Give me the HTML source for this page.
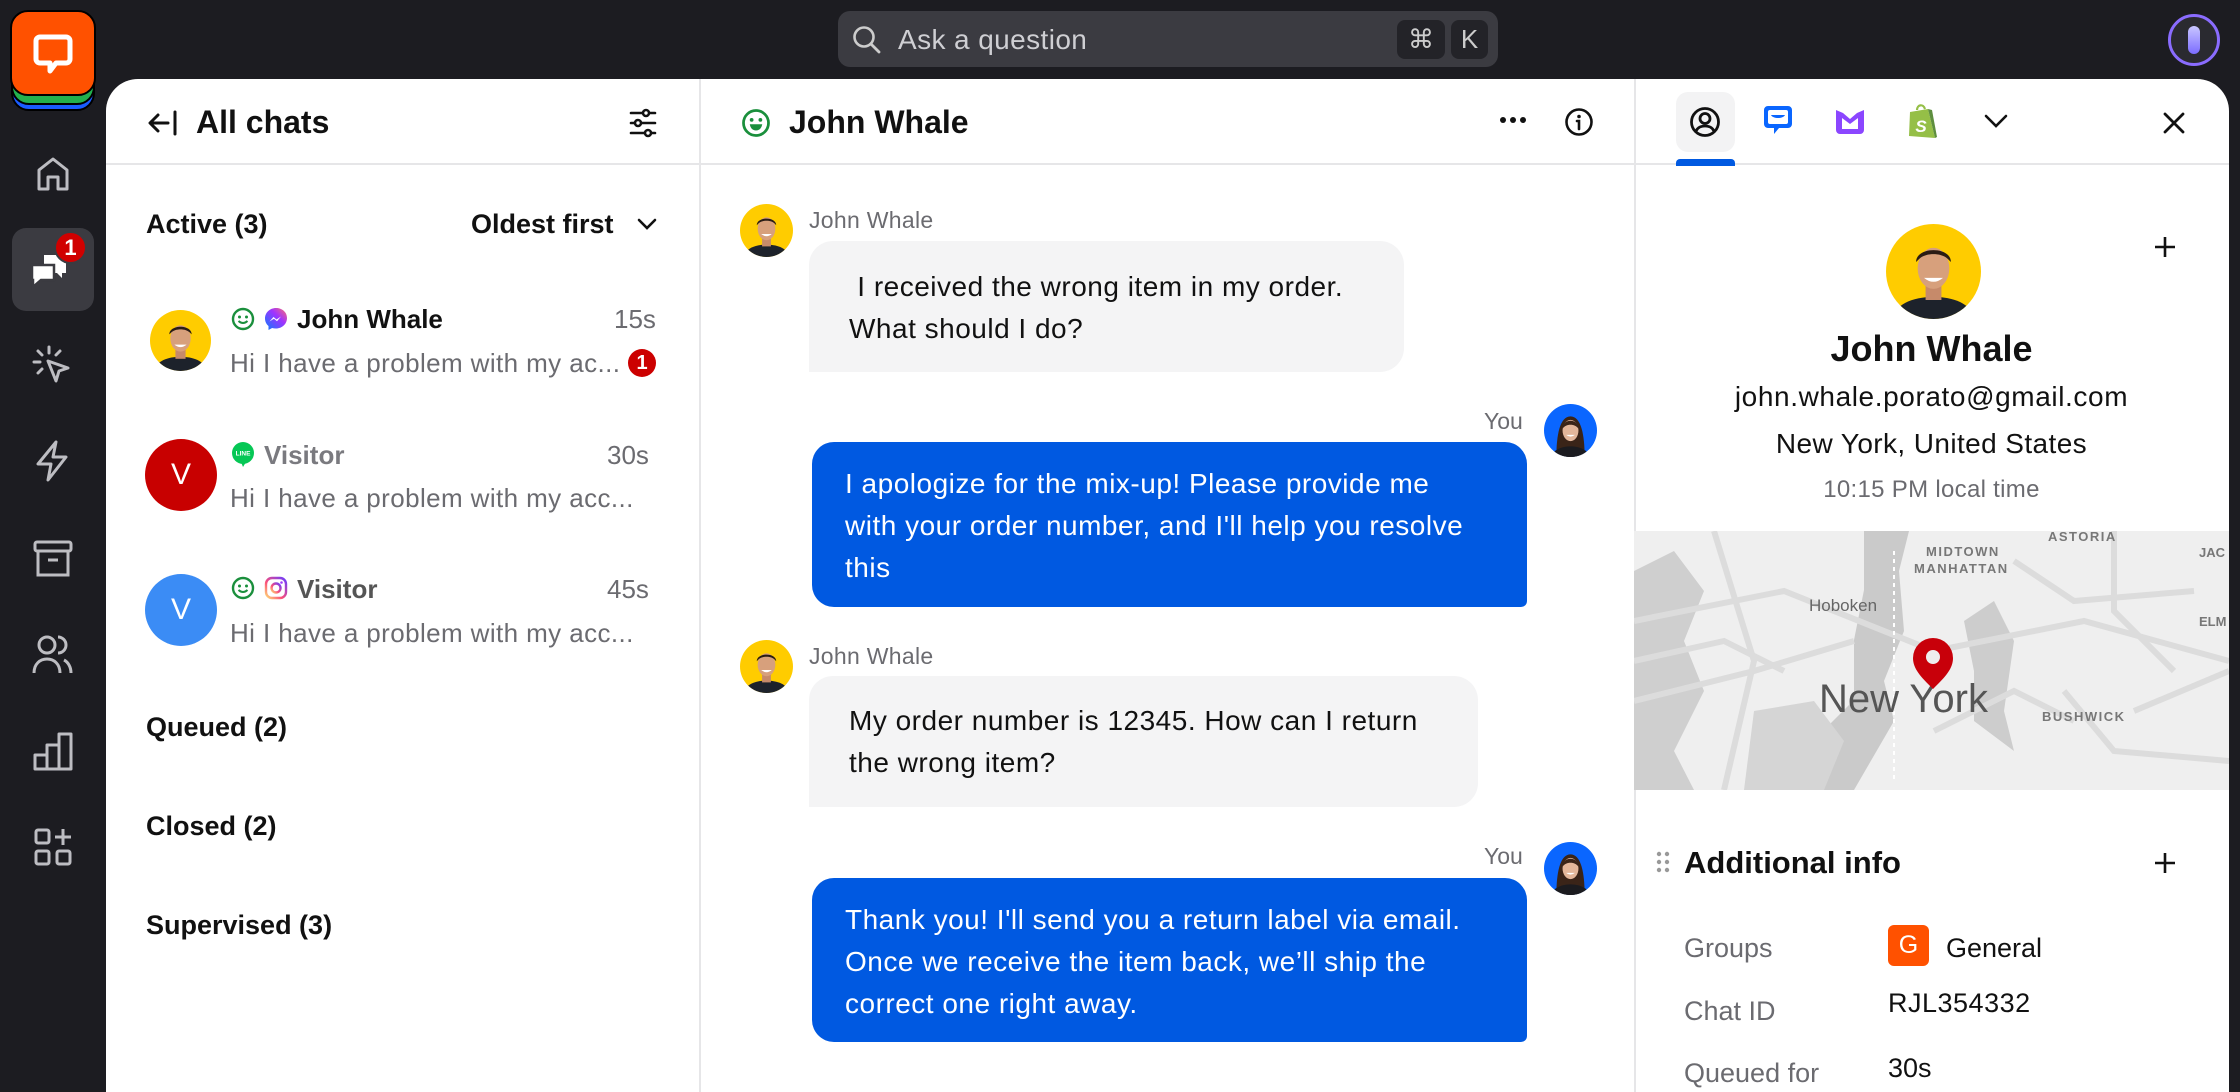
<!DOCTYPE html>
<html><head><meta charset="utf-8">
<style>
*{box-sizing:border-box;margin:0;padding:0}
html,body{width:2240px;height:1092px;overflow:hidden;background:#1c1c21;font-family:"Liberation Sans",sans-serif;color:#111}
.a{position:absolute}
.t{position:absolute;white-space:nowrap;line-height:1}
.main{position:absolute;left:106px;top:79px;width:2123px;height:1013px;background:#fff;border-radius:32px 32px 0 0;overflow:hidden}
.g{color:#6b6b70}
.bubg{position:absolute;background:#f4f4f5;border-radius:24px 24px 24px 0}
.bubb{position:absolute;background:#0059e1;border-radius:22px 22px 6px 22px;color:#fff}
.msg{position:absolute;font-size:28px;letter-spacing:0.5px;line-height:42px;white-space:nowrap}
.pv{letter-spacing:0.4px}
</style></head><body>

<!-- top bar -->
<div class="a" style="left:838px;top:11px;width:660px;height:56px;background:#3b3b41;border-radius:12px"></div>
<svg class="a" style="left:851px;top:24px" width="32" height="32" viewBox="0 0 32 32"><circle cx="13" cy="13" r="9.5" fill="none" stroke="#ccc" stroke-width="2.6"/><path d="M20 20l8 8" stroke="#ccc" stroke-width="2.8" stroke-linecap="round"/></svg>
<div class="t" style="left:898px;top:26px;font-size:28px;color:#cfcfd3;letter-spacing:0.4px">Ask a question</div>
<div class="a" style="left:1397px;top:20px;width:48px;height:39px;background:#232328;border-radius:8px;color:#ccc;font-size:26px;text-align:center;line-height:39px">⌘</div>
<div class="a" style="left:1451px;top:20px;width:37px;height:39px;background:#232328;border-radius:8px;color:#ccc;font-size:26px;text-align:center;line-height:39px">K</div>
<div class="a" style="left:2168px;top:14px;width:52px;height:52px;border-radius:50%;border:3px solid #8a6cff;background:#2a2a30"></div>
<div class="a" style="left:2188px;top:26px;width:12px;height:28px;border-radius:6px;background:linear-gradient(#c9c6ff,#7b6cff)"></div>

<!-- logo -->
<div class="a" style="left:11px;top:27px;width:84px;height:84px;border-radius:18px;background:#1a5cff;border:2px solid #000"></div>
<div class="a" style="left:11px;top:21px;width:84px;height:84px;border-radius:18px;background:#23b14d;border:2px solid #000"></div>
<div class="a" style="left:10px;top:10px;width:86px;height:86px;border-radius:18px;background:#ff5100;border:2px solid #000"></div>
<svg class="a" style="left:33px;top:34px" width="40" height="42" viewBox="0 0 40 42"><path d="M7 3h26a4 4 0 0 1 4 4v18a4 4 0 0 1-4 4H23l-6 8v-8H7a4 4 0 0 1-4-4V7a4 4 0 0 1 4-4z" fill="none" stroke="#fff" stroke-width="5" stroke-linejoin="round"/></svg>

<!-- sidebar icons -->
<svg class="a" style="left:34px;top:155px" width="38" height="38" viewBox="0 0 38 38"><path d="M5 34V15L19 4l14 11v19h-9V22h-10v12z" fill="none" stroke="#bdbdc2" stroke-width="3" stroke-linejoin="round"/></svg>
<div class="a" style="left:12px;top:228px;width:82px;height:83px;border-radius:14px;background:#3b3b41"></div>
<svg class="a" style="left:30px;top:249px" width="44" height="44" viewBox="0 0 44 44"><path d="M14 6h22v18h-4v5l-5-5h-3V16H14z" fill="#fff"/><path d="M2 16h22v15H11l-8 7v-7H2z" fill="#fff" stroke="#3b3b41" stroke-width="2.5"/></svg>
<div class="a" style="left:54px;top:231px;width:33px;height:33px;border-radius:50%;background:#d00000;border:2px solid #3b3b41;color:#fff;font-size:22px;text-align:center;line-height:29px;font-weight:bold">1</div>
<svg class="a" style="left:32px;top:345px" width="40" height="42" viewBox="0 0 40 42"><g stroke="#bdbdc2" stroke-width="3" stroke-linecap="round" fill="none"><path d="M17 2v6M6 6l4 4M28 6l-4 4M2 17h6M6 28l4-4"/><path d="M16 16l20 7-9 3-3 10z" stroke-linejoin="round"/></g></svg>
<svg class="a" style="left:34px;top:440px" width="36" height="42" viewBox="0 0 36 42"><path d="M22 2L4 24h13l-3 16L32 17H19z" fill="none" stroke="#bdbdc2" stroke-width="3" stroke-linejoin="round"/></svg>
<svg class="a" style="left:33px;top:539px" width="40" height="40" viewBox="0 0 40 40"><rect x="2" y="3" width="36" height="9" rx="2" fill="none" stroke="#bdbdc2" stroke-width="3"/><path d="M5 12v24h30V12M15 21h10" fill="none" stroke="#bdbdc2" stroke-width="3"/></svg>
<svg class="a" style="left:32px;top:633px" width="42" height="42" viewBox="0 0 42 42"><g fill="none" stroke="#bdbdc2" stroke-width="3"><circle cx="15" cy="12" r="8"/><path d="M2 40c0-9 6-14 13-14s13 5 13 14"/><path d="M26 4a8 8 0 0 1 0 16M32 27c4 2 7 7 7 13"/></g></svg>
<svg class="a" style="left:33px;top:731px" width="40" height="40" viewBox="0 0 40 40"><path d="M2 38V24h12v14zM14 38V14h12v24zM26 38V3h12v35z" fill="none" stroke="#bdbdc2" stroke-width="3" stroke-linejoin="round"/></svg>
<svg class="a" style="left:33px;top:827px" width="40" height="40" viewBox="0 0 40 40"><g fill="none" stroke="#bdbdc2" stroke-width="3"><rect x="3" y="3" width="13" height="13" rx="2"/><rect x="3" y="24" width="13" height="13" rx="2"/><rect x="24" y="24" width="13" height="13" rx="2"/><path d="M30 2v16M22 10h16"/></g></svg>

<div class="main">
<div class="a" style="left:593px;top:0;width:2px;height:1013px;background:#e6e6e8"></div>
<div class="a" style="left:1528px;top:0;width:2px;height:1013px;background:#e6e6e8"></div>
<div class="a" style="left:0;top:84px;width:2123px;height:2px;background:#e6e6e8"></div>
</div>

<!-- chat list -->
<svg class="a" style="left:148px;top:110px" width="30" height="26" viewBox="0 0 30 26"><path d="M20 13H3M10 5l-8 8 8 8M27 2v22" fill="none" stroke="#111" stroke-width="3" stroke-linecap="round" stroke-linejoin="round"/></svg>
<div class="t" style="left:196px;top:106px;font-size:32px;font-weight:bold">All chats</div>
<svg class="a" style="left:629px;top:108px" width="28" height="30" viewBox="0 0 28 30"><g fill="none" stroke="#111" stroke-width="2.6" stroke-linecap="round"><path d="M2 5h24M2 15h24M2 25h24"/><circle cx="17" cy="5" r="3" fill="#fff"/><circle cx="9" cy="15" r="3" fill="#fff"/><circle cx="19" cy="25" r="3" fill="#fff"/></g></svg>

<div class="t" style="left:146px;top:211px;font-size:27px;font-weight:bold">Active (3)</div>
<div class="t" style="left:471px;top:211px;font-size:27px;font-weight:bold">Oldest first</div>
<svg class="a" style="left:636px;top:216px" width="22" height="16" viewBox="0 0 22 16"><path d="M3 4l8 8 8-8" fill="none" stroke="#111" stroke-width="2.6" stroke-linecap="round"/></svg>

<!-- row1 -->
<svg class="a" style="left:150px;top:310px" width="61" height="61" viewBox="0 0 60 60"><clipPath id="c1"><circle cx="30" cy="30" r="30"/></clipPath><g clip-path="url(#c1)"><rect width="60" height="60" fill="#ffcc00"/><path d="M4 60c2-10 14-14 26-14s24 4 26 14z" fill="#1d222b"/><rect x="25" y="38" width="10" height="10" fill="#c68a6a"/><ellipse cx="30" cy="28" rx="10" ry="13" fill="#d7a07c"/><path d="M19 24c0-10 22-10 22 0l-2-2c-4-4-14-4-18 0z" fill="#2a1c14"/><path d="M24 34q6 5 12 0" fill="#fff"/></g></svg>
<svg class="a" style="left:231px;top:307px" width="24" height="24" viewBox="0 0 24 24"><circle cx="12" cy="12" r="10" fill="none" stroke="#1a8f3c" stroke-width="2.4"/><circle cx="8.5" cy="10" r="1.5" fill="#1a8f3c"/><circle cx="15.5" cy="10" r="1.5" fill="#1a8f3c"/><path d="M7.5 14q4.5 4 9 0" fill="none" stroke="#1a8f3c" stroke-width="2"/></svg>
<svg class="a" style="left:264px;top:307px" width="24" height="24" viewBox="0 0 24 24"><defs><linearGradient id="mg" x1="0" y1="1" x2="1" y2="0"><stop offset="0" stop-color="#0a7cff"/><stop offset=".6" stop-color="#a033ff"/><stop offset="1" stop-color="#ff6f6f"/></linearGradient></defs><path d="M12 1C6 1 1 5.5 1 11.5c0 3 1.3 5.6 3.5 7.5V23l3.6-2c1.2.3 2.5.5 3.9.5 6 0 11-4.5 11-10.5S18 1 12 1z" fill="url(#mg)"/><path d="M5.5 14.5l4-4.5 3 2.5 4.5-3-4 4.7-3-2.4z" fill="#fff"/></svg>
<div class="t" style="left:297px;top:306px;font-size:26px;font-weight:bold">John Whale</div>
<div class="t g" style="left:614px;top:306px;font-size:26px">15s</div>
<div class="t g pv" style="left:230px;top:350px;font-size:26px">Hi I have a problem with my ac...</div>
<div class="a" style="left:628px;top:349px;width:28px;height:28px;border-radius:50%;background:#cc0000;color:#fff;font-size:20px;font-weight:bold;text-align:center;line-height:28px">1</div>

<!-- row2 -->
<div class="a" style="left:145px;top:439px;width:72px;height:72px;border-radius:50%;background:#c80000;color:#fff;font-size:30px;text-align:center;line-height:72px">V</div>
<svg class="a" style="left:231px;top:442px" width="24" height="26" viewBox="0 0 24 26"><circle cx="12" cy="11" r="11" fill="#06c755"/><path d="M10 20l2 5 3-5z" fill="#06c755"/><text x="12" y="13.5" font-size="6.5" font-family="Liberation Sans" font-weight="bold" fill="#fff" text-anchor="middle">LINE</text></svg>
<div class="t" style="left:264px;top:442px;font-size:26px;font-weight:bold;color:#7a7a7f">Visitor</div>
<div class="t g" style="left:607px;top:442px;font-size:26px">30s</div>
<div class="t g pv" style="left:230px;top:485px;font-size:26px">Hi I have a problem with my acc...</div>

<!-- row3 -->
<div class="a" style="left:145px;top:574px;width:72px;height:72px;border-radius:50%;background:#3b8cf5;color:#fff;font-size:30px;text-align:center;line-height:72px">V</div>
<svg class="a" style="left:231px;top:576px" width="24" height="24" viewBox="0 0 24 24"><circle cx="12" cy="12" r="10" fill="none" stroke="#1a8f3c" stroke-width="2.4"/><circle cx="8.5" cy="10" r="1.5" fill="#1a8f3c"/><circle cx="15.5" cy="10" r="1.5" fill="#1a8f3c"/><path d="M7.5 14q4.5 4 9 0" fill="none" stroke="#1a8f3c" stroke-width="2"/></svg>
<svg class="a" style="left:264px;top:576px" width="24" height="24" viewBox="0 0 24 24"><defs><linearGradient id="ig" x1="0" y1="1" x2="1" y2="0"><stop offset="0" stop-color="#feda75"/><stop offset=".4" stop-color="#fa4f7a"/><stop offset="1" stop-color="#6a3cff"/></linearGradient></defs><rect x="2" y="2" width="20" height="20" rx="6" fill="none" stroke="url(#ig)" stroke-width="2.4"/><circle cx="12" cy="12" r="4.5" fill="none" stroke="url(#ig)" stroke-width="2.4"/><circle cx="17.5" cy="6.5" r="1.3" fill="#a33cff"/></svg>
<div class="t" style="left:297px;top:576px;font-size:26px;font-weight:bold;color:#555">Visitor</div>
<div class="t g" style="left:607px;top:576px;font-size:26px">45s</div>
<div class="t g pv" style="left:230px;top:620px;font-size:26px">Hi I have a problem with my acc...</div>

<div class="t" style="left:146px;top:714px;font-size:27px;font-weight:bold">Queued (2)</div>
<div class="t" style="left:146px;top:813px;font-size:27px;font-weight:bold">Closed (2)</div>
<div class="t" style="left:146px;top:912px;font-size:27px;font-weight:bold">Supervised (3)</div>

<!-- chat header -->
<svg class="a" style="left:741px;top:108px" width="30" height="30" viewBox="0 0 24 24"><circle cx="12" cy="12" r="10" fill="none" stroke="#1a8f3c" stroke-width="2.2"/><circle cx="8.5" cy="9.5" r="1.5" fill="#1a8f3c"/><circle cx="15.5" cy="9.5" r="1.5" fill="#1a8f3c"/><path d="M7 13h10q-1 5-5 5t-5-5z" fill="#1a8f3c"/></svg>
<div class="t" style="left:789px;top:106px;font-size:32px;font-weight:bold">John Whale</div>
<svg class="a" style="left:1499px;top:115px" width="28" height="10" viewBox="0 0 28 10"><circle cx="4" cy="5" r="3" fill="#111"/><circle cx="14" cy="5" r="3" fill="#111"/><circle cx="24" cy="5" r="3" fill="#111"/></svg>
<svg class="a" style="left:1564px;top:107px" width="30" height="30" viewBox="0 0 30 30"><circle cx="15" cy="15" r="12.5" fill="none" stroke="#111" stroke-width="2.6"/><circle cx="15" cy="9.5" r="1.8" fill="#111"/><path d="M13 14h2v8" fill="none" stroke="#111" stroke-width="2.6" stroke-linecap="round"/></svg>

<!-- messages -->
<svg class="a" style="left:740px;top:204px" width="53" height="53" viewBox="0 0 60 60"><clipPath id="c2"><circle cx="30" cy="30" r="30"/></clipPath><g clip-path="url(#c2)"><rect width="60" height="60" fill="#ffcc00"/><path d="M4 60c2-10 14-14 26-14s24 4 26 14z" fill="#1d222b"/><rect x="25" y="38" width="10" height="10" fill="#c68a6a"/><ellipse cx="30" cy="28" rx="10" ry="13" fill="#d7a07c"/><path d="M19 24c0-10 22-10 22 0l-2-2c-4-4-14-4-18 0z" fill="#2a1c14"/><path d="M24 34q6 5 12 0" fill="#fff"/></g></svg>
<div class="t g" style="left:809px;top:209px;font-size:23px;letter-spacing:0.3px">John Whale</div>
<div class="bubg" style="left:809px;top:241px;width:595px;height:131px"></div>
<div class="msg" style="left:849px;top:266px">&nbsp;I received the wrong item in my order.<br>What should I do?</div>

<div class="t g" style="left:1484px;top:410px;font-size:23px">You</div>
<svg class="a" style="left:1544px;top:404px" width="53" height="53" viewBox="0 0 60 60"><clipPath id="c3"><circle cx="30" cy="30" r="30"/></clipPath><g clip-path="url(#c3)"><rect width="60" height="60" fill="#0a66ff"/><path d="M14 60c0-25 4-46 16-46s16 21 16 46z" fill="#3a2418"/><path d="M8 60c2-8 12-12 22-12s20 4 22 12z" fill="#1b1b1f"/><ellipse cx="30" cy="30" rx="9" ry="12" fill="#e3b69a"/><path d="M21 28c0-12 18-12 18 0c-4-6-14-6-18 0z" fill="#3a2418"/><path d="M25 35q5 4 10 0" fill="#fff"/></g></svg>
<div class="bubb" style="left:812px;top:442px;width:715px;height:165px"></div>
<div class="msg" style="left:845px;top:463px;color:#fff">I apologize for the mix-up! Please provide me<br>with your order number, and I'll help you resolve<br>this</div>

<svg class="a" style="left:740px;top:640px" width="53" height="53" viewBox="0 0 60 60"><clipPath id="c4"><circle cx="30" cy="30" r="30"/></clipPath><g clip-path="url(#c4)"><rect width="60" height="60" fill="#ffcc00"/><path d="M4 60c2-10 14-14 26-14s24 4 26 14z" fill="#1d222b"/><rect x="25" y="38" width="10" height="10" fill="#c68a6a"/><ellipse cx="30" cy="28" rx="10" ry="13" fill="#d7a07c"/><path d="M19 24c0-10 22-10 22 0l-2-2c-4-4-14-4-18 0z" fill="#2a1c14"/><path d="M24 34q6 5 12 0" fill="#fff"/></g></svg>
<div class="t g" style="left:809px;top:645px;font-size:23px;letter-spacing:0.3px">John Whale</div>
<div class="bubg" style="left:809px;top:676px;width:669px;height:131px"></div>
<div class="msg" style="left:849px;top:700px">My order number is 12345. How can I return<br>the wrong item?</div>

<div class="t g" style="left:1484px;top:845px;font-size:23px">You</div>
<svg class="a" style="left:1544px;top:842px" width="53" height="53" viewBox="0 0 60 60"><clipPath id="c5"><circle cx="30" cy="30" r="30"/></clipPath><g clip-path="url(#c5)"><rect width="60" height="60" fill="#0a66ff"/><path d="M14 60c0-25 4-46 16-46s16 21 16 46z" fill="#3a2418"/><path d="M8 60c2-8 12-12 22-12s20 4 22 12z" fill="#1b1b1f"/><ellipse cx="30" cy="30" rx="9" ry="12" fill="#e3b69a"/><path d="M21 28c0-12 18-12 18 0c-4-6-14-6-18 0z" fill="#3a2418"/><path d="M25 35q5 4 10 0" fill="#fff"/></g></svg>
<div class="bubb" style="left:812px;top:878px;width:715px;height:164px"></div>
<div class="msg" style="left:845px;top:899px;color:#fff">Thank you! I'll send you a return label via email.<br>Once we receive the item back, we’ll ship the<br>correct one right away.</div>

<!-- right panel tabs -->
<div class="a" style="left:1676px;top:92px;width:59px;height:60px;border-radius:12px;background:#f3f3f4"></div>
<div class="a" style="left:1676px;top:159px;width:59px;height:7px;border-radius:4px 4px 0 0;background:#0059e1"></div>
<svg class="a" style="left:1689px;top:106px" width="32" height="32" viewBox="0 0 32 32"><circle cx="16" cy="16" r="13.5" fill="none" stroke="#111" stroke-width="2.8"/><circle cx="16" cy="12.5" r="5" fill="none" stroke="#111" stroke-width="2.8"/><path d="M7 25c2-4 5-5 9-5s7 1 9 5" fill="none" stroke="#111" stroke-width="2.8"/></svg>
<svg class="a" style="left:1762px;top:104px" width="32" height="34" viewBox="0 0 32 34"><path d="M6 2h20a4 4 0 0 1 4 4v14a4 4 0 0 1-4 4h-9l-5 6v-6H6a4 4 0 0 1-4-4V6a4 4 0 0 1 4-4z" fill="#0a66ff"/><rect x="6" y="6" width="20" height="14" rx="2" fill="#fff"/><path d="M9 11h14c-2 4-12 4-14 0z" fill="#0a66ff"/></svg>
<svg class="a" style="left:1834px;top:106px" width="32" height="30" viewBox="0 0 32 30"><path d="M2 4v20a4 4 0 0 0 4 4h20a4 4 0 0 0 4-4V4l-7 3-7 6-7-6z" fill="#8b46ff"/><path d="M8 12l8 6 8-6v11H8z" fill="#fff"/></svg>
<svg class="a" style="left:1906px;top:102px" width="32" height="38" viewBox="0 0 32 38"><path d="M11 8c0-5 6-7 8-1" fill="none" stroke="#95bf47" stroke-width="2.2"/><path d="M4 10l18-3 7 29-26-2z" fill="#95bf47"/><path d="M22 7l7 29 2-1-5-27z" fill="#5e8e3e"/><text x="15" y="30" font-size="17" font-weight="bold" font-family="Liberation Sans" fill="#fff" text-anchor="middle" font-style="italic">S</text></svg>
<svg class="a" style="left:1983px;top:113px" width="26" height="16" viewBox="0 0 26 16"><path d="M3 3l10 10 10-10" fill="none" stroke="#111" stroke-width="2.6" stroke-linecap="round"/></svg>
<svg class="a" style="left:2162px;top:111px" width="24" height="24" viewBox="0 0 24 24"><path d="M3 3l18 18M21 3L3 21" stroke="#111" stroke-width="2.8" stroke-linecap="round"/></svg>

<!-- profile -->
<svg class="a" style="left:1886px;top:224px" width="95" height="95" viewBox="0 0 60 60"><clipPath id="c6"><circle cx="30" cy="30" r="30"/></clipPath><g clip-path="url(#c6)"><rect width="60" height="60" fill="#ffcc00"/><path d="M4 60c2-10 14-14 26-14s24 4 26 14z" fill="#1d222b"/><rect x="25" y="38" width="10" height="10" fill="#c68a6a"/><ellipse cx="30" cy="28" rx="10" ry="13" fill="#d7a07c"/><path d="M19 24c0-10 22-10 22 0l-2-2c-4-4-14-4-18 0z" fill="#2a1c14"/><path d="M24 34q6 5 12 0" fill="#fff"/></g></svg>
<svg class="a" style="left:2153px;top:235px" width="24" height="24" viewBox="0 0 24 24"><path d="M12 2v20M2 12h20" stroke="#111" stroke-width="2.6"/></svg>
<div class="t" style="left:1634px;width:595px;text-align:center;top:331px;font-size:36px;font-weight:bold">John Whale</div>
<div class="t" style="left:1634px;width:595px;text-align:center;top:383px;font-size:28px;letter-spacing:0.6px">john.whale.porato@gmail.com</div>
<div class="t" style="left:1634px;width:595px;text-align:center;top:430px;font-size:28px;letter-spacing:0.4px">New York, United States</div>
<div class="t g" style="left:1634px;width:595px;text-align:center;top:478px;font-size:24px;letter-spacing:0.3px">10:15 PM local time</div>

<!-- map -->
<svg class="a" style="left:1634px;top:531px" width="595" height="259" viewBox="0 0 595 259">
<rect width="595" height="259" fill="#efefef"/>
<path d="M0 40L40 20 70 60 50 110 70 160 40 220 60 259H0z" fill="#cfcfcf"/>
<path d="M230 0h45l-10 40 5 60-20 50 10 40-40 69h-70l30-50 40-40 0-60 10-50z" fill="#cacaca"/>
<path d="M330 90l30-20 20 40-10 70 10 40-40-30 0-50z" fill="#cdcdcd"/>
<path d="M120 180l60-10 30 40-20 49h-80z" fill="#d5d5d5"/>
<g fill="none" stroke="#dcdcdc" stroke-width="6">
<path d="M0 90L150 60 300 120 450 90 595 130"/><path d="M0 170L120 140 220 110"/><path d="M380 30l60 40 120-10"/><path d="M80 0l40 130 -30 129"/><path d="M430 160l50 60 115 10"/><path d="M480 0v80l60 60"/><path d="M300 200l80-40 60 30"/><path d="M0 130l90 -20 60 30"/><path d="M500 180l95-40"/>
</g>
<path d="M260 20v230" stroke="#fff" stroke-width="2" stroke-dasharray="4 4"/>
<text x="292" y="25" font-size="13" font-weight="bold" fill="#777" font-family="Liberation Sans" letter-spacing="1.5">MIDTOWN</text>
<text x="280" y="42" font-size="13" font-weight="bold" fill="#777" font-family="Liberation Sans" letter-spacing="1.5">MANHATTAN</text>
<text x="414" y="10" font-size="13" font-weight="bold" fill="#777" font-family="Liberation Sans" letter-spacing="1.5">ASTORIA</text>
<text x="565" y="26" font-size="13" font-weight="bold" fill="#777" font-family="Liberation Sans">JAC</text>
<text x="565" y="95" font-size="13" font-weight="bold" fill="#777" font-family="Liberation Sans">ELM</text>
<text x="408" y="190" font-size="13" font-weight="bold" fill="#777" font-family="Liberation Sans" letter-spacing="1.5">BUSHWICK</text>
<text x="175" y="80" font-size="17" fill="#666" font-family="Liberation Sans">Hoboken</text>
<text x="185" y="181" font-size="40" fill="#555" font-family="Liberation Sans">New York</text>
<path d="M299 158c-12-12-20-20-20-31a20 20 0 0 1 40 0c0 11-8 19-20 31z" fill="#c8000a"/><circle cx="299" cy="126" r="7" fill="#eee"/>
</svg>

<!-- additional info -->
<svg class="a" style="left:1656px;top:851px" width="14" height="22" viewBox="0 0 14 22"><g fill="#999"><circle cx="3" cy="3" r="2.2"/><circle cx="11" cy="3" r="2.2"/><circle cx="3" cy="11" r="2.2"/><circle cx="11" cy="11" r="2.2"/><circle cx="3" cy="19" r="2.2"/><circle cx="11" cy="19" r="2.2"/></g></svg>
<div class="t" style="left:1684px;top:847px;font-size:31px;font-weight:bold">Additional info</div>
<svg class="a" style="left:2153px;top:851px" width="24" height="24" viewBox="0 0 24 24"><path d="M12 2v20M2 12h20" stroke="#111" stroke-width="2.6"/></svg>
<div class="t g" style="left:1684px;top:935px;font-size:27px">Groups</div>
<div class="a" style="left:1888px;top:925px;width:41px;height:41px;border-radius:6px;background:#ff5100;color:#fff;font-size:25px;text-align:center;line-height:41px">G</div>
<div class="t" style="left:1946px;top:935px;font-size:27px">General</div>
<div class="t g" style="left:1684px;top:998px;font-size:27px">Chat ID</div>
<div class="t" style="left:1888px;top:990px;font-size:27px;letter-spacing:0.5px">RJL354332</div>
<div class="t g" style="left:1684px;top:1060px;font-size:27px">Queued for</div>
<div class="t" style="left:1888px;top:1055px;font-size:27px">30s</div>
</body></html>
